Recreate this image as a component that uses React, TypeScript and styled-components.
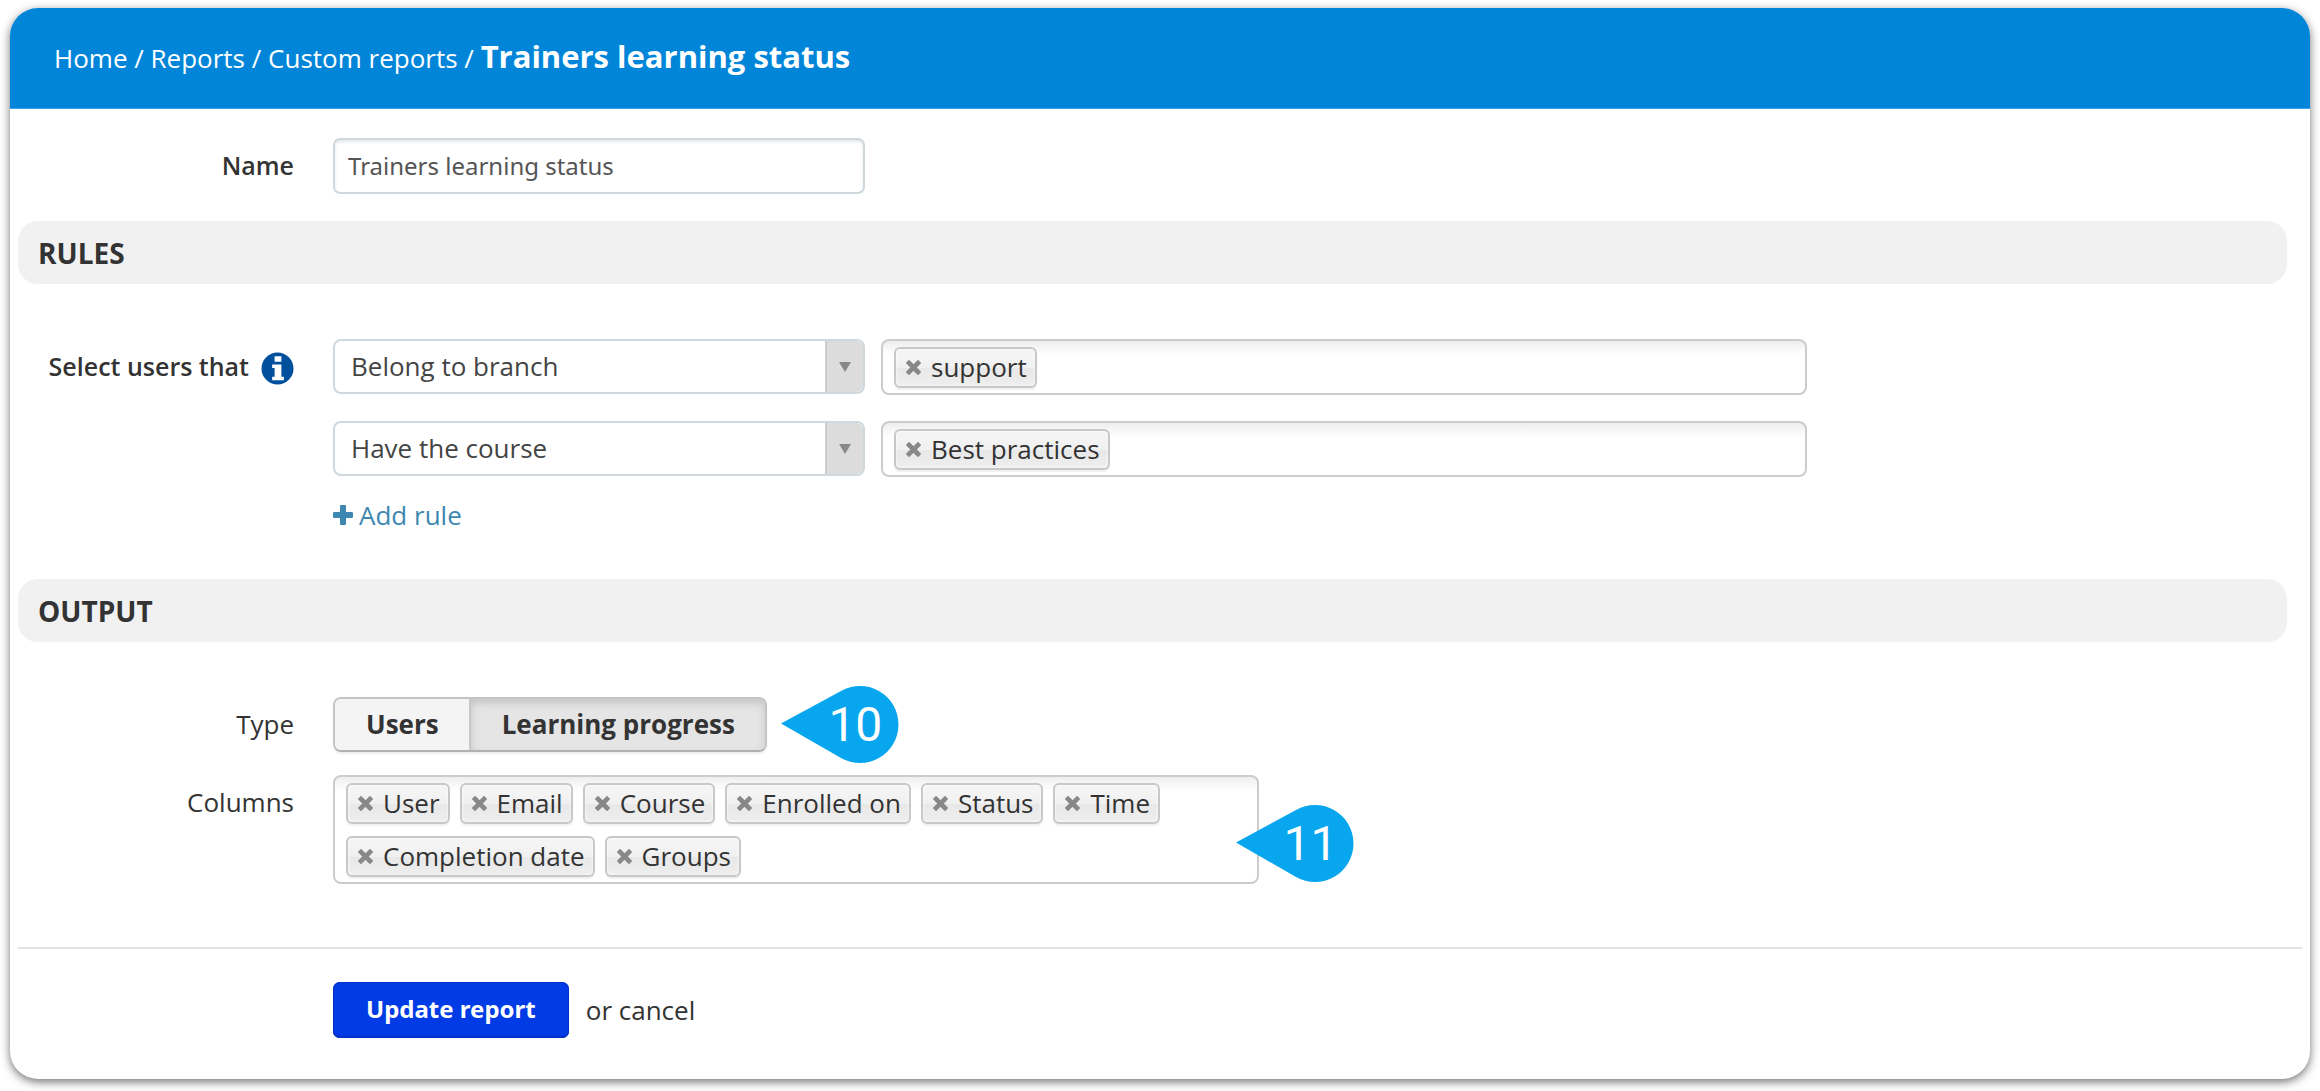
import React from 'react';
import styled, { createGlobalStyle, css } from 'styled-components';

const GlobalStyle = createGlobalStyle`
  *, *::before, *::after { box-sizing: border-box; }
  body {
    margin: 0;
    padding: 8px 10px 12px;
    background: #fff;
    color: #333;
    font: 26px/36px "Open Sans", "Noto Sans", sans-serif;
  }
  button, input, select { font: inherit; color: inherit; margin: 0; }
  a { color: inherit; text-decoration: none; }
`;

const Card = styled.main`
  border-radius: 28px;
  overflow: hidden;
  background: #fff;
  box-shadow: 0 3px 10px rgba(0, 0, 0, 0.55);
`;

const Header = styled.header`
  height: 101px;
  padding: 0 44px 3px;
  display: flex;
  align-items: center;
  background: #0085d9;
  border-bottom: 1px solid #3a9fe6;
  color: #fff;
`;

const Crumbs = styled.nav`
  white-space: pre;
`;

const Current = styled.strong`
  font-size: 31px;
  font-weight: 700;
`;

const Form = styled.form`
  padding: 29px 8px 41px;
`;

const Row = styled.div`
  display: grid;
  grid-template-columns: 276px minmax(0, 1fr);
  column-gap: 39px;
  align-items: start;
`;

const labelStyle = css<{ $strong?: boolean }>`
  display: flex;
  justify-content: flex-end;
  align-items: center;
  gap: 12px;
  height: 54px;
  ${(p) =>
    p.$strong &&
    css`
      font-size: 25px;
      font-weight: 600;
    `}
`;

const Label = styled.label<{ $strong?: boolean }>`
  ${labelStyle}
`;

const GroupLabel = styled.div<{ $strong?: boolean }>`
  ${labelStyle}
`;

const NameInput = styled.input`
  width: 532px;
  max-width: 100%;
  height: 56px;
  padding: 0 13px 2px;
  border: 2px solid #cfd9dd;
  border-radius: 7px;
  background: #fff;
  box-shadow: inset 0 2px 3px rgba(0, 0, 0, 0.1);
  color: #555;
  font-family: "Noto Sans", sans-serif;
  font-size: 24px;
`;

const SectionTitle = styled.h2`
  margin: 27px 15px 0 0;
  height: 63px;
  padding: 0 20px;
  display: flex;
  align-items: center;
  border-radius: 20px;
  background: #f1f1f1;
  font-size: 28px;
  font-weight: 700;
`;

const RulesRow = styled(Row)`
  padding: 55px 0 25px;
`;

const Rules = styled.div`
  display: grid;
  row-gap: 26px;
`;

const RuleLine = styled.div`
  display: grid;
  grid-template-columns: 532px minmax(0, 926px);
  column-gap: 16px;
`;

const SelectBox = styled.div`
  display: grid;
  grid-template-columns: minmax(0, 1fr) 38px;
  height: 55px;
  border: 2px solid #cfd9dd;
  border-radius: 8px;
  background: #fff;
  overflow: hidden;
`;

const Select = styled.select`
  grid-area: 1 / 1 / 2 / 3;
  appearance: none;
  border: 0;
  padding: 0 56px 2px 16px;
  background: transparent;
  color: #444;
`;

const SelectArrow = styled.span`
  grid-area: 1 / 2;
  display: flex;
  align-items: center;
  justify-content: center;
  border-left: 2px solid #ccc;
  border-radius: 0 6px 6px 0;
  background: #dcdcdc;
  pointer-events: none;
`;

const TagBox = styled.ul`
  position: relative;
  max-width: 926px;
  margin: 0;
  padding: 6px 10px 5px 11px;
  display: flex;
  flex-wrap: wrap;
  gap: 12px 10px;
  list-style: none;
  border: 2px solid #ccc;
  border-radius: 8px;
  background: linear-gradient(#eee 0, #fff 14px);
`;

const TagItem = styled.li`
  display: flex;
  align-items: center;
  height: 41px;
  padding: 0 8px 2px 10px;
  border: 2px solid #c8c8c8;
  border-radius: 6px;
  background: linear-gradient(#f4f4f4 20%, #f0f0f0 50%, #e8e8e8 52%, #eee);
  box-shadow: inset 0 0 3px #fff, 0 2px 1px rgba(0, 0, 0, 0.06);
`;

const RemoveButton = styled.button`
  display: flex;
  padding: 2px 0 0;
  margin-right: 10px;
  border: 0;
  background: none;
`;

const AddRule = styled.a`
  justify-self: start;
  display: flex;
  align-items: center;
  gap: 6px;
  height: 24px;
  color: #3d87b0;
`;

const OutputFields = styled.div`
  display: grid;
  row-gap: 24px;
  padding: 55px 0 63px;
`;

const TypeLine = styled.div`
  display: flex;
  align-items: center;
  gap: 14px;
  height: 54px;
`;

const Segments = styled.div`
  display: flex;
  height: 55px;
  border: 2px solid #c4c4c4;
  border-bottom-color: #b0b0b0;
  border-radius: 8px;
  overflow: hidden;
  box-shadow: 0 2px 2px rgba(0, 0, 0, 0.07);
`;

const Segment = styled.button<{ $active?: boolean }>`
  padding: 0 30px 1px 31px;
  border: 0;
  background: #f4f4f4;
  font-weight: 700;
  ${(p) =>
    p.$active &&
    css`
      border-left: 2px solid #c8c8c8;
      background: #e5e5e5;
      box-shadow: inset 0 4px 8px rgba(0, 0, 0, 0.15);
    `}
`;

const Marker = styled.span`
  display: grid;
  align-items: center;
  width: 118px;
  height: 77px;
  color: #fff;
  font: 48px/77px Roboto, sans-serif;
  svg { grid-area: 1 / 1; }
`;

const MarkerText = styled.span`
  grid-area: 1 / 1;
  padding-left: 31px;
  text-align: center;
`;

const PinnedMarker = styled.li`
  position: absolute;
  right: -97px;
  bottom: 0;
`;

const Footer = styled.footer`
  border-top: 2px solid #e3e3e3;
  padding-top: 33px;
`;

const Actions = styled.div`
  grid-column: 2;
  display: flex;
  align-items: center;
  gap: 17px;
`;

const Submit = styled.button`
  height: 56px;
  padding: 0 33px 2px;
  border: 0;
  border-radius: 7px;
  background: #003be6;
  box-shadow: inset 0 0 0 1px #0033c8, inset 0 -2px 1px #0030c0;
  color: #fff;
  font-family: "Noto Sans", sans-serif;
  font-size: 24px;
  font-weight: 700;
`;

const InfoMark = styled.svg`
  margin-top: 5px;
`;

const InfoIcon = () => (
  <InfoMark width="33" height="33" viewBox="0 0 34 34" aria-hidden="true">
    <circle cx="17" cy="17" r="16.5" fill="#00509e" />
    <path fill="#fff" d="M14 4.500h7v5.500h-7zM11.500 13H21v12.500h2.500V29h-12v-3.500H14v-9h-2.500z" />
  </InfoMark>
);

const PlusIcon = () => (
  <svg width="20" height="20" viewBox="0 0 20 20" aria-hidden="true">
    <path fill="#3d87b0" d="M8 0h4a1 1 0 0 1 1 1v6h6a1 1 0 0 1 1 1v4a1 1 0 0 1-1 1h-6v6a1 1 0 0 1-1 1H8a1 1 0 0 1-1-1v-6H1a1 1 0 0 1-1-1V8a1 1 0 0 1 1-1h6V1a1 1 0 0 1 1-1z" />
  </svg>
);

const CrossIcon = () => (
  <svg width="15" height="15" viewBox="0 0 15 15" aria-hidden="true">
    <path d="M3 3l9 9M12 3l-9 9" stroke="#888" strokeWidth="4.600" strokeLinecap="square" />
  </svg>
);

const DropIcon = () => (
  <svg width="12" height="10" viewBox="0 0 12 10" aria-hidden="true">
    <path fill="#888" d="M0 0h12L6 10z" />
  </svg>
);

const Callout = ({ value }: { value: string }) => (
  <Marker>
    <svg width="118" height="77" viewBox="0 0 118 77" aria-hidden="true">
      <path fill="#08a6ee" d="M0 37.500L60 5A38.500 38.500 0 1 1 60 72z" />
    </svg>
    <MarkerText>{value}</MarkerText>
  </Marker>
);

const Tag = ({ name }: { name: string }) => (
  <TagItem>
    <RemoveButton type="button" aria-label={`Remove ${name}`}>
      <CrossIcon />
    </RemoveButton>
    {name}
  </TagItem>
);

const rules = [
  { condition: 'Belong to branch', tag: 'support' },
  { condition: 'Have the course', tag: 'Best practices' },
];

const columns = ['User', 'Email', 'Course', 'Enrolled on', 'Status', 'Time', 'Completion date', 'Groups'];

export default function App() {
  return (
    <>
      <GlobalStyle />
      <Card>
        <Header>
          <Crumbs aria-label="Breadcrumb">
            <a href="#home">Home</a> / <a href="#reports">Reports</a> / <a href="#custom">Custom reports</a>{' / '}
            <Current>Trainers learning status</Current>
          </Crumbs>
        </Header>
        <Form onSubmit={(e) => e.preventDefault()}>
          <Row>
            <Label $strong htmlFor="name">Name</Label>
            <NameInput id="name" type="text" defaultValue="Trainers learning status" />
          </Row>

          <SectionTitle>RULES</SectionTitle>
          <RulesRow>
            <GroupLabel $strong>
              Select users that <InfoIcon />
            </GroupLabel>
            <Rules>
              {rules.map((rule) => (
                <RuleLine key={rule.condition}>
                  <SelectBox>
                    <Select aria-label="Condition" defaultValue={rule.condition}>
                      {rules.map((r) => (
                        <option key={r.condition}>{r.condition}</option>
                      ))}
                    </Select>
                    <SelectArrow>
                      <DropIcon />
                    </SelectArrow>
                  </SelectBox>
                  <TagBox>
                    <Tag name={rule.tag} />
                  </TagBox>
                </RuleLine>
              ))}
              <AddRule href="#add">
                <PlusIcon />
                Add rule
              </AddRule>
            </Rules>
          </RulesRow>

          <SectionTitle>OUTPUT</SectionTitle>
          <OutputFields>
            <Row>
              <GroupLabel>Type</GroupLabel>
              <TypeLine>
                <Segments>
                  <Segment type="button">Users</Segment>
                  <Segment type="button" $active>Learning progress</Segment>
                </Segments>
                <Callout value="10" />
              </TypeLine>
            </Row>
            <Row>
              <GroupLabel>Columns</GroupLabel>
              <TagBox>
                {columns.map((name) => (
                  <Tag key={name} name={name} />
                ))}
                <PinnedMarker>
                  <Callout value="11" />
                </PinnedMarker>
              </TagBox>
            </Row>
          </OutputFields>

          <Footer>
            <Row>
              <Actions>
                <Submit type="submit">Update report</Submit>
                <span>
                  or <a href="#cancel">cancel</a>
                </span>
              </Actions>
            </Row>
          </Footer>
        </Form>
      </Card>
    </>
  );
}
